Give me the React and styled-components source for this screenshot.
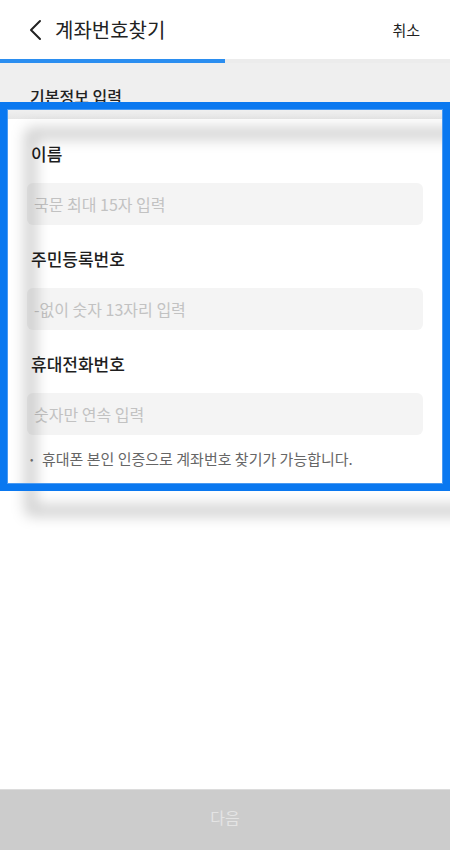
import styled, { createGlobalStyle } from 'styled-components';

const GlobalStyle = createGlobalStyle`
  * {
    box-sizing: border-box;
  }
  body {
    margin: 0;
    background: #ffffff;
    font-family: 'Noto Sans CJK KR', 'Noto Sans', sans-serif;
    color: #222222;
  }
`;

const fields = [
  { label: '이름', placeholder: '국문 최대 15자 입력' },
  { label: '주민등록번호', placeholder: '-없이 숫자 13자리 입력' },
  { label: '휴대전화번호', placeholder: '숫자만 연속 입력' },
];

const BackIcon = () => (
  <svg width="16" height="22" viewBox="0 0 16 22" fill="none">
    <path d="M13 2 L4 11 L13 20" stroke="#222" strokeWidth="2" strokeLinecap="round" strokeLinejoin="round" />
  </svg>
);

const App = () => {
  return (
    <>
      <GlobalStyle />
      <Page>
        <Header>
          <BackButton type="button">
            <BackIcon />
          </BackButton>
          <Title>계좌번호찾기</Title>
          <CancelButton type="button">취소</CancelButton>
        </Header>
        <Progress>
          <ProgressFill $percent={50} />
        </Progress>
        <SectionHead>기본정보 입력</SectionHead>
        <Form>
          {fields.map((field) => (
            <Field key={field.label}>
              <Label>{field.label}</Label>
              <Input placeholder={field.placeholder} />
            </Field>
          ))}
          <Note>
            <Bullet>•</Bullet>
            휴대폰 본인 인증으로 계좌번호 찾기가 가능합니다.
          </Note>
          <LiftShadow />
        </Form>
        <NextButton type="button" disabled>
          다음
        </NextButton>
        <FocusFrame />
      </Page>
    </>
  );
};

const Page = styled.div`
  position: relative;
  width: 450px;
  height: 850px;
  display: flex;
  flex-direction: column;
  overflow: hidden;
  background: #ffffff;
`;

const Header = styled.header`
  height: 59px;
  display: flex;
  align-items: center;
  padding: 0 30px 0 27px;
`;

const BackButton = styled.button`
  border: 0;
  background: none;
  padding: 0;
  display: flex;
  align-items: center;
  margin-right: 12px;
`;

const Title = styled.h1`
  flex: 1;
  margin: 0;
  font-size: 20px;
  font-weight: 400;
  color: #222222;
  line-height: 26px;
`;

const CancelButton = styled.button`
  border: 0;
  background: none;
  padding: 0;
  font-family: inherit;
  font-size: 15px;
  color: #222222;
`;

const Progress = styled.div`
  height: 4px;
  background: #ececec;
`;

const ProgressFill = styled.div`
  height: 100%;
  width: ${(p) => p.$percent}%;
  background: #2b8ef0;
`;

const SectionHead = styled.h2`
  margin: 0;
  height: 56px;
  padding: 22px 0 0 30px;
  font-size: 16px;
  font-weight: 500;
  line-height: 22px;
  color: #222222;
  background: linear-gradient(#efefef 85%, #e6e6e6);
`;

const Form = styled.section`
  position: relative;
  flex: 1;
  padding: 23px 27px 0;
  background: #ffffff;
`;

const Field = styled.div`
  display: flex;
  flex-direction: column;
  gap: 17px;
  margin-bottom: 22px;

  &:nth-of-type(3) {
    margin-bottom: 14px;
  }
`;

const Label = styled.label`
  font-size: 17px;
  font-weight: 500;
  line-height: 24px;
  color: #1e1e1e;
  padding-left: 4px;
`;

const Input = styled.input`
  height: 42px;
  border: 0;
  border-radius: 6px;
  background: #f4f4f4;
  padding: 0 7px;
  font-family: inherit;
  font-size: 16px;
  color: #222222;
  outline: none;

  &::placeholder {
    color: #c2c2c2;
  }
`;

const Note = styled.p`
  margin: 0;
  padding-left: 3px;
  font-size: 15px;
  line-height: 20px;
  color: #666666;
  display: flex;
`;

const Bullet = styled.span`
  width: 12px;
  font-size: 10px;
  color: #777777;
`;

/* soft outline of the lifted card */
const LiftShadow = styled.div`
  position: absolute;
  left: 25px;
  top: 9px;
  width: 450px;
  height: 388px;
  border: 11px solid rgba(0, 0, 0, 0.2);
  border-radius: 6px;
  filter: blur(7px);
  pointer-events: none;
`;

const NextButton = styled.button`
  height: 61px;
  border: 0;
  border-top: 1px solid #dcdcdc;
  padding: 0 0 6px;
  background: #cccccc;
  font-family: inherit;
  font-size: 16px;
  color: #e4e4e4;
`;

/* selection frame drawn over the form area */
const FocusFrame = styled.div`
  position: absolute;
  left: 0;
  top: 102px;
  width: 450px;
  height: 389px;
  border: 7px solid #0a78f0;
  box-shadow: inset 0 0 0 1px #4a9af2;
  pointer-events: none;
`;

export default App;
